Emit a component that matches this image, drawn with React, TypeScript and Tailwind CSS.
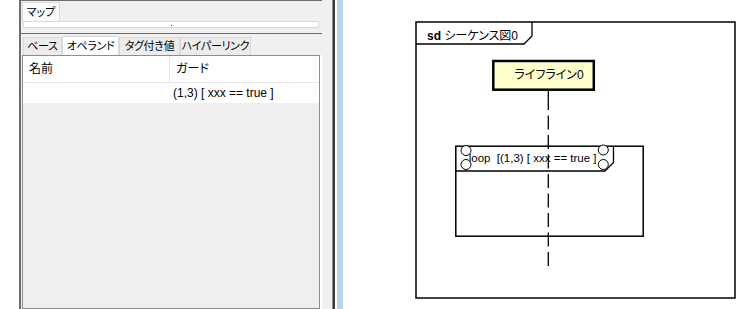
export default function App() {
  const tabs = [
    { label: 'ベース', w: 'w-[39px]', active: false },
    { label: 'オペランド', w: 'w-[57px]', active: true },
    { label: 'タグ付き値', w: 'w-[61px]', active: false },
    { label: 'ハイパーリンク', w: 'w-[71px]', active: false },
  ];

  return (
    <div className="flex h-[309px] w-[753px] overflow-hidden bg-white font-['Liberation_Sans','Noto_Sans_CJK_JP',sans-serif] text-[12px] text-black [font-feature-settings:'palt']">
      <div className="w-[19px] shrink-0" />

      {/* Property panel */}
      <div className="flex w-[303px] shrink-0 flex-col border-l-2 border-[#6d6d6d] bg-[#f0f0f0]">
        {/* Map pane */}
        <div className="flex h-[34px] shrink-0 flex-col border-y border-[#6e6e6e]">
          <div className="flex h-[20px] items-end pl-[1px]">
            <div className="flex h-[19px] w-[38px] items-center justify-center whitespace-nowrap border-x border-t border-[#d9d9d9] bg-[#fafafa] text-[11px] leading-none">
              マップ
            </div>
          </div>
          <div className="ml-[2px] flex h-[7px] w-[296px] items-end justify-center border border-[#d9d9d9] bg-white pb-px">
            <span className="h-px w-px bg-[#2020a0]" />
          </div>
        </div>

        {/* Operand tabs */}
        <div className="flex h-[21px] shrink-0 items-end pl-[2px]">
          {tabs.map((t) => (
            <div
              key={t.label}
              className={
                t.active
                  ? `${t.w} flex h-[19px] items-center justify-center whitespace-nowrap border-x border-t border-[#d9d9d9] bg-white text-[11px] leading-none tracking-[-0.3px]`
                  : `${t.w} flex h-[18px] items-center justify-center whitespace-nowrap border-x border-t border-[#d9d9d9] bg-[#ececec] text-[11px] leading-none tracking-[-0.3px]`
              }
            >
              {t.label}
            </div>
          ))}
        </div>

        {/* Table */}
        <div className="flex min-h-0 flex-1">
          <div className="ml-px flex w-[298px] flex-col border border-[#8e8e8e] bg-[#efefef]">
            <div className="flex h-[27px] shrink-0 border-b border-[#e5e5e5] bg-white">
              <div className="flex w-[147px] items-center border-r border-[#e5e5e5] pl-[6px]">名前</div>
              <div className="flex flex-1 items-center pl-[6px]">ガード</div>
            </div>
            <div className="flex h-[20px] shrink-0 bg-white">
              <div className="w-[148px]" />
              <div className="flex flex-1 items-center whitespace-pre pl-[2px]">(1,3) [ xxx == true ]</div>
            </div>
          </div>
          <div className="w-[2px] bg-white" />
        </div>
      </div>

      {/* Splitter */}
      <div className="w-[11px] shrink-0 border-r border-[#8a8a8a] bg-[#f0f0f0]" />
      <div className="w-[2px] shrink-0 bg-[#3a3a3a]" />
      <div className="w-[2px] shrink-0 bg-white" />
      <div className="w-[6px] shrink-0 bg-[#bcd3ec]" />

      {/* Diagram canvas */}
      <svg width="410" height="309" viewBox="343 0 410 309" className="shrink-0 font-['Liberation_Sans','Noto_Sans_CJK_JP',sans-serif]">
        <rect x="416" y="22" width="319" height="276" fill="none" stroke="#000" strokeWidth="1.5" />
        <path d="M416 44 H524 L532 36 V22" fill="none" stroke="#000" strokeWidth="1.3" />
        <text x="427" y="40" fontSize="12" fill="#000">
          <tspan fontWeight="bold">sd</tspan> シーケンス図0
        </text>

        <rect x="493.3" y="61" width="100.5" height="28.7" fill="#ffffcc" stroke="#000" strokeWidth="2.5" />
        <text x="549" y="79" fontSize="12" textAnchor="middle" fill="#000">
          ライフライン0
        </text>

        <line x1="548.3" y1="91" x2="548.3" y2="110" stroke="#000" strokeWidth="1.3" />
        <line x1="548.3" y1="115.5" x2="548.3" y2="266" stroke="#000" strokeWidth="1.3" strokeDasharray="14 5.5" />

        <rect x="455.8" y="146.2" width="187.4" height="90" fill="none" stroke="#000" strokeWidth="1.5" />
        <path d="M456 171 H605 L613.5 162.5 V146" fill="none" stroke="#000" strokeWidth="1.3" />
        <text x="468.7" y="161.5" fontSize="11.5" fill="#000">
          {'loop\u00a0 [(1,3) [ xxx == true ]'}
        </text>

        <circle cx="466" cy="150.5" r="5" fill="#fff" stroke="#000" strokeWidth="1" />
        <circle cx="466" cy="164.5" r="5" fill="#fff" stroke="#000" strokeWidth="1" />
        <circle cx="603.3" cy="150" r="5" fill="#fff" stroke="#000" strokeWidth="1" />
        <circle cx="603.3" cy="164.5" r="5" fill="#fff" stroke="#000" strokeWidth="1" />
      </svg>
    </div>
  );
}
